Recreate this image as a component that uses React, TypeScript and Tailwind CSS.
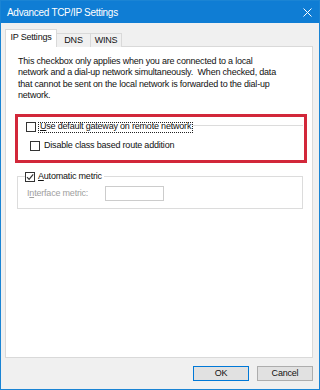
import React from "react";

const font = { fontFamily: '"Liberation Sans", Arial, sans-serif' };

function Box({ checked }: { checked?: boolean }) {
  return (
    <span className="w-[10px] h-[10px] border border-[#333333] bg-white flex items-center justify-center shrink-0">
      {checked && (
        <svg width="8" height="8" viewBox="0 0 8 8">
          <path d="M1 4.2 L3.1 6.3 L7.2 1.3" fill="none" stroke="#333333" strokeWidth="1.2" />
        </svg>
      )}
    </span>
  );
}

export default function App() {
  return (
    <div
      style={font}
      className="w-[320px] h-[390px] border border-[#1a84d4] bg-[#f0f0f0] flex flex-col text-[9px] tracking-[-0.2px] text-[#111111]"
    >
      {/* Title bar */}
      <div className="h-[22px] bg-[#0f7dd4] flex items-center justify-between pl-[6px] pr-[7px] shrink-0">
        <span className="text-white text-[10px] tracking-[-0.3px]">Advanced TCP/IP Settings</span>
        <svg width="9" height="9" viewBox="0 0 9 9">
          <path d="M0.5 0.5 L8.5 8.5 M8.5 0.5 L0.5 8.5" stroke="#ffffff" strokeWidth="1" fill="none" />
        </svg>
      </div>

      <div className="pl-[4px] pt-[7px] flex flex-col">
        {/* Tabs */}
        <div className="flex items-end h-[17px] -mb-px relative z-10">
          <div className="w-[52px] h-[18px] bg-white border border-b-0 border-[#d9d9d9] flex items-center justify-center pb-[1px]">
            IP Settings
          </div>
          <div className="w-[34px] h-[14px] bg-[#f0f0f0] border-t border-r border-[#d9d9d9] flex items-center justify-center">
            DNS
          </div>
          <div className="w-[31px] h-[14px] bg-[#f0f0f0] border-t border-r border-[#d9d9d9] flex items-center justify-center">
            WINS
          </div>
        </div>

        {/* Panel */}
        <div className="w-[308px] h-[312px] bg-white border border-[#d9d9d9] flex flex-col">
          <p className="pl-[12px] pt-[9px] leading-[11.3px] whitespace-pre">
            This checkbox only applies when you are connected to a local
            <br />
            network and a dial-up network simultaneously.  When checked, data
            <br />
            that cannot be sent on the local network is forwarded to the dial-up
            <br />
            network.
          </p>

          {/* Highlighted box */}
          <div className="ml-[9px] mt-[13px] w-[292px] h-[49px] border-[3px] border-[#d2283a] pl-[8px] pt-[5px] flex flex-col">
            <div className="h-[10px] flex items-center">
              <Box />
              <span className="ml-[2px] border border-dotted border-[#222222] px-[1px] h-[11px] flex items-center">
                <span>
                  <span className="underline">U</span>se default gateway on remote network
                </span>
              </span>
              <span className="flex-1 border-t border-[#dcdcdc] mr-[1px] mb-[3px]" />
            </div>
            <div className="h-[10px] mt-[9px] pl-[4px] flex items-center">
              <Box />
              <span className="ml-[4px]">Disable class based route addition</span>
            </div>
          </div>

          {/* Metric groupbox */}
          <fieldset className="ml-[11px] mt-[8px] w-[286px] border border-[#dcdcdc] pb-[7px]">
            <legend className="ml-[7px] pr-[2px] flex items-center h-[11px]">
              <Box checked />
              <span className="ml-[3px]">
                <span className="underline">A</span>utomatic metric
              </span>
            </legend>
            <div className="mt-[4px] pl-[9px] flex items-center h-[15px]">
              <span className="w-[78px] text-[#a0a0a0]">
                I<span className="underline">n</span>terface metric:
              </span>
              <span className="w-[59px] h-[15px] border border-[#cccccc] bg-white" />
            </div>
          </fieldset>
        </div>

        {/* Buttons */}
        <div className="mt-[8px] flex justify-end gap-[8px] pr-[6px]">
          <button className="w-[56px] h-[15px] border border-[#0078d7] bg-[#e1e1e1] flex items-center justify-center">
            OK
          </button>
          <button className="w-[56px] h-[15px] border border-[#adadad] bg-[#e1e1e1] flex items-center justify-center">
            Cancel
          </button>
        </div>
      </div>
    </div>
  );
}
